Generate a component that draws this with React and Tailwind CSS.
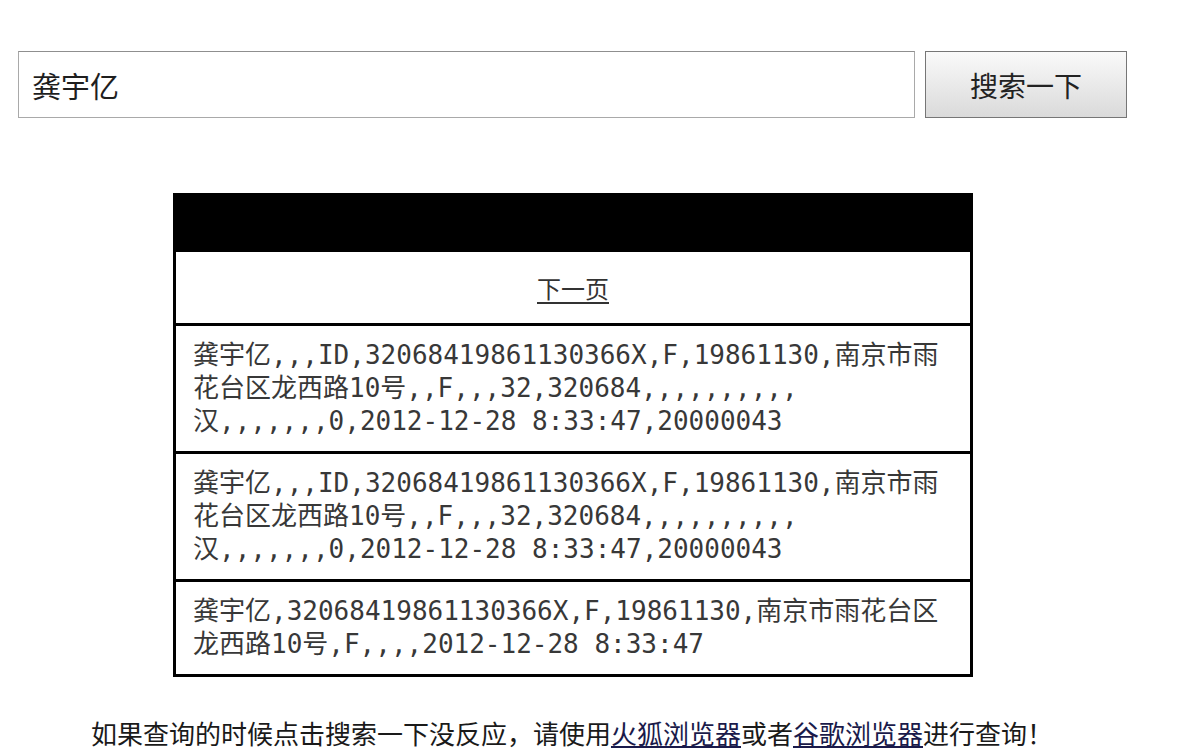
import { useState } from 'react';

const rows = [
  '龚宇亿,,,ID,32068419861130366X,F,19861130,南京市雨花台区龙西路10号,,F,,,32,320684,,,,,,,,,,汉,,,,,,,0,2012-12-28 8:33:47,20000043',
  '龚宇亿,,,ID,32068419861130366X,F,19861130,南京市雨花台区龙西路10号,,F,,,32,320684,,,,,,,,,,汉,,,,,,,0,2012-12-28 8:33:47,20000043',
  '龚宇亿,32068419861130366X,F,19861130,南京市雨花台区龙西路10号,F,,,,2012-12-28 8:33:47',
];

const App = () => {
  const [query, setQuery] = useState('龚宇亿');

  return (
    <div className="min-h-screen bg-white font-['Microsoft_YaHei','Noto_Sans_CJK_SC',sans-serif] text-[#222]">
      <div className="w-[1110px] ml-[18px] pt-[51px]">
        {/* search bar */}
        <div className="flex gap-[10px]">
          <input
            value={query}
            onChange={(e) => setQuery(e.target.value)}
            className="w-[897px] h-[67px] border border-[#a9a9a9] border-t-[#8f8f8f] bg-white px-[13px] text-[29px] text-[#1e1e1e] outline-none font-['Noto_Sans_CJK_SC',sans-serif]"
          />
          <button className="w-[202px] h-[67px] border border-[#767676] bg-gradient-to-b from-[#fafafa] to-[#dadada] text-[28px] text-[#222] font-['Noto_Sans_CJK_SC',sans-serif]">
            搜索一下
          </button>
        </div>

        {/* results table */}
        <div className="w-[800px] mx-auto mt-[75px] border-[3px] border-black">
          <div className="h-[56px] bg-black"></div>
          <div className="h-[71px] flex items-center justify-center">
            <a href="#" className="text-[24px] text-[#333] underline underline-offset-4 font-['Noto_Sans_CJK_SC',sans-serif]">
              下一页
            </a>
          </div>
          {rows.map((r, i) => (
            <div
              key={i}
              className="border-t-[3px] border-black pl-[17px] pr-[20px] py-[13px] text-[26px] leading-[33px] text-[#383838] font-['DejaVu_Sans_Mono','Noto_Sans_CJK_SC',monospace]"
            >
              {r}
            </div>
          ))}
        </div>

        {/* footer note */}
        <p className="mt-[39px] text-center text-[26px] leading-[34px] text-[#1a1a1a] font-['Noto_Sans_CJK_SC',sans-serif] pr-[2px]">
          如果查询的时候点击搜索一下没反应，请使用
          <a href="#" className="underline text-[#1a1a4a]">火狐浏览器</a>
          或者
          <a href="#" className="underline text-[#1a1a4a]">谷歌浏览器</a>
          进行查询！
        </p>
      </div>
    </div>
  );
};

export default App;
